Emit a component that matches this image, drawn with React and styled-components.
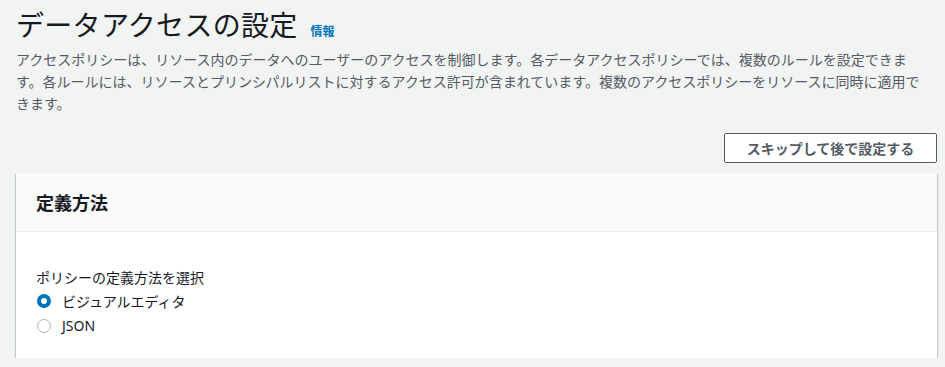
import React, { useState } from "react";
import styled, { createGlobalStyle } from "styled-components";

const Global = createGlobalStyle`
  html, body { margin: 0; padding: 0; background: #f2f3f3; }
  body {
    font-family: "Noto Sans", "Noto Sans CJK JP", sans-serif;
    color: #16191f;
  }
  * { box-sizing: border-box; }
`;

const Page = styled.div`
  padding: 6px 8px 0 16px;
`;

const TitleRow = styled.div`
  display: flex;
  align-items: baseline;
  gap: 13px;
`;

const Title = styled.h1`
  margin: 0;
  font-family: "Noto Sans CJK JP", sans-serif;
  font-size: 28px;
  line-height: 36px;
  font-weight: 400;
  letter-spacing: 0.3px;
  color: #16191f;
`;

const InfoLink = styled.a`
  font-family: "Noto Sans CJK JP", sans-serif;
  font-size: 12px;
  font-weight: 700;
  color: #0073bb;
  text-decoration: none;
`;

const Description = styled.p`
  margin: 6px 0 0;
  max-width: 913px;
  font-family: "Noto Sans CJK JP", sans-serif;
  font-size: 14px;
  line-height: 22px;
  color: #545b64;
`;

const Actions = styled.div`
  display: flex;
  justify-content: flex-end;
  margin-top: 19px;
`;

const Button = styled.button`
  font-family: "Noto Sans CJK JP", sans-serif;
  font-size: 14px;
  font-weight: 700;
  line-height: 20px;
  padding: 4px 20px;
  width: 213px;
  color: #545b64;
  background: #fff;
  border: 1px solid #545b64;
  border-radius: 2px;
  cursor: pointer;
`;

const Card = styled.section`
  margin-top: 10px;
  background: #fff;
  box-shadow: 0 1px 1px 0 rgba(0, 28, 36, 0.3),
    1px 1px 1px 0 rgba(0, 28, 36, 0.15),
    -1px 1px 1px 0 rgba(0, 28, 36, 0.15);
`;

const CardHeader = styled.div`
  background: #fafafa;
  border-bottom: 1px solid #eaeded;
  padding: 18px 20px 18px;
`;

const CardTitle = styled.h2`
  margin: 0;
  font-family: "Noto Sans CJK JP", sans-serif;
  font-size: 18px;
  line-height: 22px;
  font-weight: 700;
  color: #16191f;
`;

const CardBody = styled.div`
  padding: 34px 20px 20px;
`;

const FieldLabel = styled.div`
  font-family: "Noto Sans CJK JP", sans-serif;
  font-size: 14px;
  line-height: 22px;
  color: #16191f;
`;

const Option = styled.label`
  display: flex;
  align-items: center;
  gap: 11px;
  height: 25px;
  padding-left: 1px;
  font-family: "Noto Sans", "Noto Sans CJK JP", sans-serif;
  font-size: 14px;
  color: #16191f;
  cursor: pointer;
`;

const RadioDot = styled.span`
  width: 14px;
  height: 14px;
  border-radius: 50%;
  background: #fff;
  border: ${(p) => (p.$checked ? "4px solid #0073bb" : "1px solid #aab7b8")};
  flex: none;
`;

const options = [
  { id: "visual", label: "ビジュアルエディタ" },
  { id: "json", label: "JSON" },
];

export default function App() {
  const [value, setValue] = useState("visual");
  return (
    <Page>
      <Global />
      <TitleRow>
        <Title>データアクセスの設定</Title>
        <InfoLink href="#">情報</InfoLink>
      </TitleRow>
      <Description>
        アクセスポリシーは、リソース内のデータへのユーザーのアクセスを制御します。各データアクセスポリシーでは、複数のルールを設定できます。各ルールには、リソースとプリンシパルリストに対するアクセス許可が含まれています。複数のアクセスポリシーをリソースに同時に適用できます。
      </Description>
      <Actions>
        <Button type="button">スキップして後で設定する</Button>
      </Actions>
      <Card>
        <CardHeader>
          <CardTitle>定義方法</CardTitle>
        </CardHeader>
        <CardBody>
          <FieldLabel>ポリシーの定義方法を選択</FieldLabel>
          {options.map((o) => (
            <Option key={o.id} onClick={() => setValue(o.id)}>
              <RadioDot $checked={value === o.id} />
              {o.label}
            </Option>
          ))}
        </CardBody>
      </Card>
    </Page>
  );
}
